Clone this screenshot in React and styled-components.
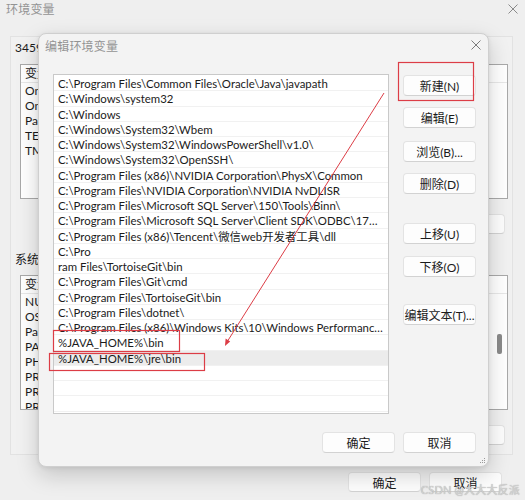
import React from "react";
import styled, { createGlobalStyle } from "styled-components";

const FONT = `"Segoe UI", Lato, "Noto Sans CJK SC", sans-serif`;

const GlobalStyle = createGlobalStyle`
  html, body { margin: 0; padding: 0; background: #eeeeee; }
  body { font-family: ${FONT}; font-size: 12px; color: #1b1b1b; }
  * { box-sizing: border-box; }
`;

const Page = styled.div`
  position: relative;
  width: 525px;
  height: 500px;
  overflow: hidden;
  background: #efefef;
`;

/* ---------- background window ---------- */
const BgWindow = styled.div`
  display: flex;
  flex-direction: column;
  height: 500px;
`;

const TitleBar = styled.div`
  display: flex;
  align-items: center;
  justify-content: space-between;
  height: ${(p) => p.$h}px;
  padding: 0 ${(p) => p.$pr}px 0 ${(p) => p.$pl}px;
  flex-shrink: 0;
`;

const TitleText = styled.span`
  font-size: 12px;
  color: #939393;
  letter-spacing: 0.2px;
`;

const BgPanel = styled.div`
  margin: 19px 12px 0 10px;
  height: 419px;
  border: 1px solid #e2e2e2;
  background: #f1f1f1;
  padding: 2px 4px 0 9px;
  display: flex;
  flex-direction: column;
`;

const GroupLabel = styled.div`
  height: 16px;
  line-height: 16px;
  font-size: 12px;
  color: #1b1b1b;
  margin-top: ${(p) => p.$mt}px;
  margin-left: -5px;
`;

const VarList = styled.div`
  margin-top: ${(p) => p.$mt}px;
  height: 135px;
  background: #ffffff;
  border: 1px solid #a9a9a9;
  position: relative;
  overflow: hidden;
`;

const VarHeader = styled.div`
  height: 18px;
  line-height: 18px;
  padding-left: 4px;
  border-bottom: 1px solid #e8e8e8;
  display: flex;
`;

const VarRow = styled.div`
  height: 15px;
  line-height: 15px;
  padding-left: 4px;
  white-space: nowrap;
`;

const Scroll = styled.div`
  position: absolute;
  right: 5px;
  top: ${(p) => p.$top}px;
  width: 5px;
  height: 20px;
  background: #8a8a8a;
  border-radius: 2px;
`;

const BgButtonRow = styled.div`
  margin-top: 15px;
  display: flex;
  justify-content: flex-end;
  gap: 8px;
  padding-right: 3px;
`;

const BgFooter = styled.div`
  margin-top: 17px;
  display: flex;
  justify-content: flex-end;
  gap: 8px;
  padding-right: 23px;
`;

const Button = styled.div`
  width: 73px;
  height: ${(p) => p.$h || 21}px;
  margin-top: ${(p) => p.$mt || 0}px;
  background: #fdfdfd;
  border: 1px solid #e3e3e3;
  border-bottom-color: #d2d2d2;
  border-radius: 4px;
  display: flex;
  align-items: center;
  justify-content: center;
  font-size: 12px;
  color: #1b1b1b;
  white-space: nowrap;
  flex-shrink: 0;
`;

/* ---------- dialog ---------- */
const Dialog = styled.div`
  position: absolute;
  left: 38px;
  top: 33px;
  width: 451px;
  height: 434px;
  background: #f3f3f3;
  border: 1px solid #cfcfcf;
  border-radius: 8px;
  box-shadow: 0 8px 22px rgba(0, 0, 0, 0.18), 0 1px 4px rgba(0, 0, 0, 0.08);
  display: flex;
  flex-direction: column;
`;

const DialogBody = styled.div`
  display: flex;
  padding: 18px 0 0 14px;
`;

const PathList = styled.div`
  width: 336px;
  height: 340px;
  background: #ffffff;
  border: 1px solid #c9c9c9;
  padding-top: 1px;
  overflow: hidden;
`;

const PathRow = styled.div`
  height: 15.25px;
  line-height: 15px;
  padding: 0 4px 0 4px;
  font-size: 11.4px;
  color: #1b1b1b;
  white-space: nowrap;
  overflow: hidden;
  text-overflow: ellipsis;
  border-bottom: 1px solid #f1f1f1;
  background: ${(p) => (p.$selected ? "#ececec" : "transparent")};
`;

const ButtonColumn = styled.div`
  display: flex;
  flex-direction: column;
  margin-left: 14px;
  padding-top: 1px;
`;

const DialogFooter = styled.div`
  margin-top: 18px;
  display: flex;
  justify-content: flex-end;
  gap: 8px;
  padding-right: 12px;
`;

const Grip = styled.svg`
  position: absolute;
  right: 2px;
  bottom: 2px;
`;

const Overlay = styled.svg`
  position: absolute;
  left: 0;
  top: 0;
  pointer-events: none;
`;

const Watermark = styled.div`
  position: absolute;
  right: 5px;
  bottom: 3px;
  font-size: 11px;
  color: #d2d2d2;
  text-shadow: 0 0 1px #9a9a9a;
  letter-spacing: 0.2px;
  white-space: nowrap;
`;

const CloseIcon = ({ size = 10, color = "#7a7a7a" }) => (
  <svg width={size} height={size} viewBox="0 0 10 10">
    <path d="M0.5 0.5 L9.5 9.5 M9.5 0.5 L0.5 9.5" stroke={color} strokeWidth="1" fill="none" />
  </svg>
);

const paths = [
  "C:\\Program Files\\Common Files\\Oracle\\Java\\javapath",
  "C:\\Windows\\system32",
  "C:\\Windows",
  "C:\\Windows\\System32\\Wbem",
  "C:\\Windows\\System32\\WindowsPowerShell\\v1.0\\",
  "C:\\Windows\\System32\\OpenSSH\\",
  "C:\\Program Files (x86)\\NVIDIA Corporation\\PhysX\\Common",
  "C:\\Program Files\\NVIDIA Corporation\\NVIDIA NvDLISR",
  "C:\\Program Files\\Microsoft SQL Server\\150\\Tools\\Binn\\",
  "C:\\Program Files\\Microsoft SQL Server\\Client SDK\\ODBC\\170\\Tools\\Binn\\",
  "C:\\Program Files (x86)\\Tencent\\微信web开发者工具\\dll",
  "C:\\Pro",
  "ram Files\\TortoiseGit\\bin",
  "C:\\Program Files\\Git\\cmd",
  "C:\\Program Files\\TortoiseGit\\bin",
  "C:\\Program Files\\dotnet\\",
  "C:\\Program Files (x86)\\Windows Kits\\10\\Windows Performance Toolkit\\",
  "%JAVA_HOME%\\bin",
  "%JAVA_HOME%\\jre\\bin",
  "",
  "",
  "",
  "",
];

const userVars = ["OneDrive", "OneDriveConsumer", "Path", "TEMP", "TMP"];
const sysVars = [
  "NUMBER_OF_PROCESSORS",
  "OS",
  "Path",
  "PATHEXT",
  "PHPSTORM_VM_OPTIONS",
  "PROCESSOR_ARCHITECTURE",
  "PROCESSOR_IDENTIFIER",
  "PROCESSOR_LEVEL",
];

const sideButtons = [
  { label: "新建(N)", mt: 0 },
  { label: "编辑(E)", mt: 11 },
  { label: "浏览(B)...", mt: 13 },
  { label: "删除(D)", mt: 11 },
  { label: "上移(U)", mt: 29 },
  { label: "下移(O)", mt: 12 },
  { label: "编辑文本(T)...", mt: 27 },
];

export default function App() {
  return (
    <>
      <GlobalStyle />
      <Page>
        <BgWindow>
          <TitleBar $h={17} $pl={6} $pr={7}>
            <TitleText>环境变量</TitleText>
            <CloseIcon size={10} color="#8a8a8a" />
          </TitleBar>
          <BgPanel>
            <GroupLabel $mt={1}>3459 的用户变量(U)</GroupLabel>
            <VarList $mt={8}>
              <VarHeader>变量</VarHeader>
              {userVars.map((v) => (
                <VarRow key={v}>{v}</VarRow>
              ))}
            </VarList>
            <BgButtonRow>
              <Button $h={20}>新建(N)...</Button>
              <Button $h={20}>编辑(E)...</Button>
              <Button $h={20}>删除(D)</Button>
            </BgButtonRow>
            <GroupLabel $mt={18}>系统变量(S)</GroupLabel>
            <VarList $mt={7}>
              <VarHeader>变量</VarHeader>
              {sysVars.map((v) => (
                <VarRow key={v}>{v}</VarRow>
              ))}
              <Scroll $top={58} />
            </VarList>
            <BgButtonRow>
              <Button $h={20}>新建(W)...</Button>
              <Button $h={20}>编辑(I)...</Button>
              <Button $h={20}>删除(L)</Button>
            </BgButtonRow>
          </BgPanel>
          <BgFooter>
            <Button $h={20}>确定</Button>
            <Button $h={20}>取消</Button>
          </BgFooter>
        </BgWindow>

        <Dialog>
          <TitleBar $h={22} $pl={6} $pr={7}>
            <TitleText>编辑环境变量</TitleText>
            <CloseIcon size={10} color="#7a7a7a" />
          </TitleBar>
          <DialogBody>
            <PathList>
              {paths.map((p, i) => (
                <PathRow key={i} $selected={i === 18}>
                  {p}
                </PathRow>
              ))}
            </PathList>
            <ButtonColumn>
              {sideButtons.map((b) => (
                <Button key={b.label} $mt={b.mt}>
                  {b.label}
                </Button>
              ))}
            </ButtonColumn>
          </DialogBody>
          <DialogFooter>
            <Button>确定</Button>
            <Button>取消</Button>
          </DialogFooter>
          <Grip width="8" height="8" viewBox="0 0 8 8">
            <rect x="6" y="2" width="1" height="1" fill="#9a9a9a" />
            <rect x="4" y="4" width="1" height="1" fill="#9a9a9a" />
            <rect x="6" y="4" width="1" height="1" fill="#9a9a9a" />
            <rect x="2" y="6" width="1" height="1" fill="#9a9a9a" />
            <rect x="4" y="6" width="1" height="1" fill="#9a9a9a" />
            <rect x="6" y="6" width="1" height="1" fill="#9a9a9a" />
          </Grip>
        </Dialog>

        <Overlay width="525" height="500" viewBox="0 0 525 500">
          <rect x="398.5" y="62.5" width="75" height="38" fill="none" stroke="#dc3d46" strokeWidth="1.2" />
          <rect x="53.5" y="330.5" width="126" height="21" fill="none" stroke="#dc3d46" strokeWidth="1.2" />
          <rect x="49.5" y="353.5" width="155" height="17" fill="none" stroke="#dc3d46" strokeWidth="1.2" />
          <line x1="384" y1="93" x2="227" y2="342" stroke="#dc3d46" strokeWidth="1" />
          <path d="M225 346 L225.6 338.5 L230.2 341.4 Z" fill="#dc3d46" />
        </Overlay>

        <Watermark>CSDN @大大大反派</Watermark>
      </Page>
    </>
  );
}
